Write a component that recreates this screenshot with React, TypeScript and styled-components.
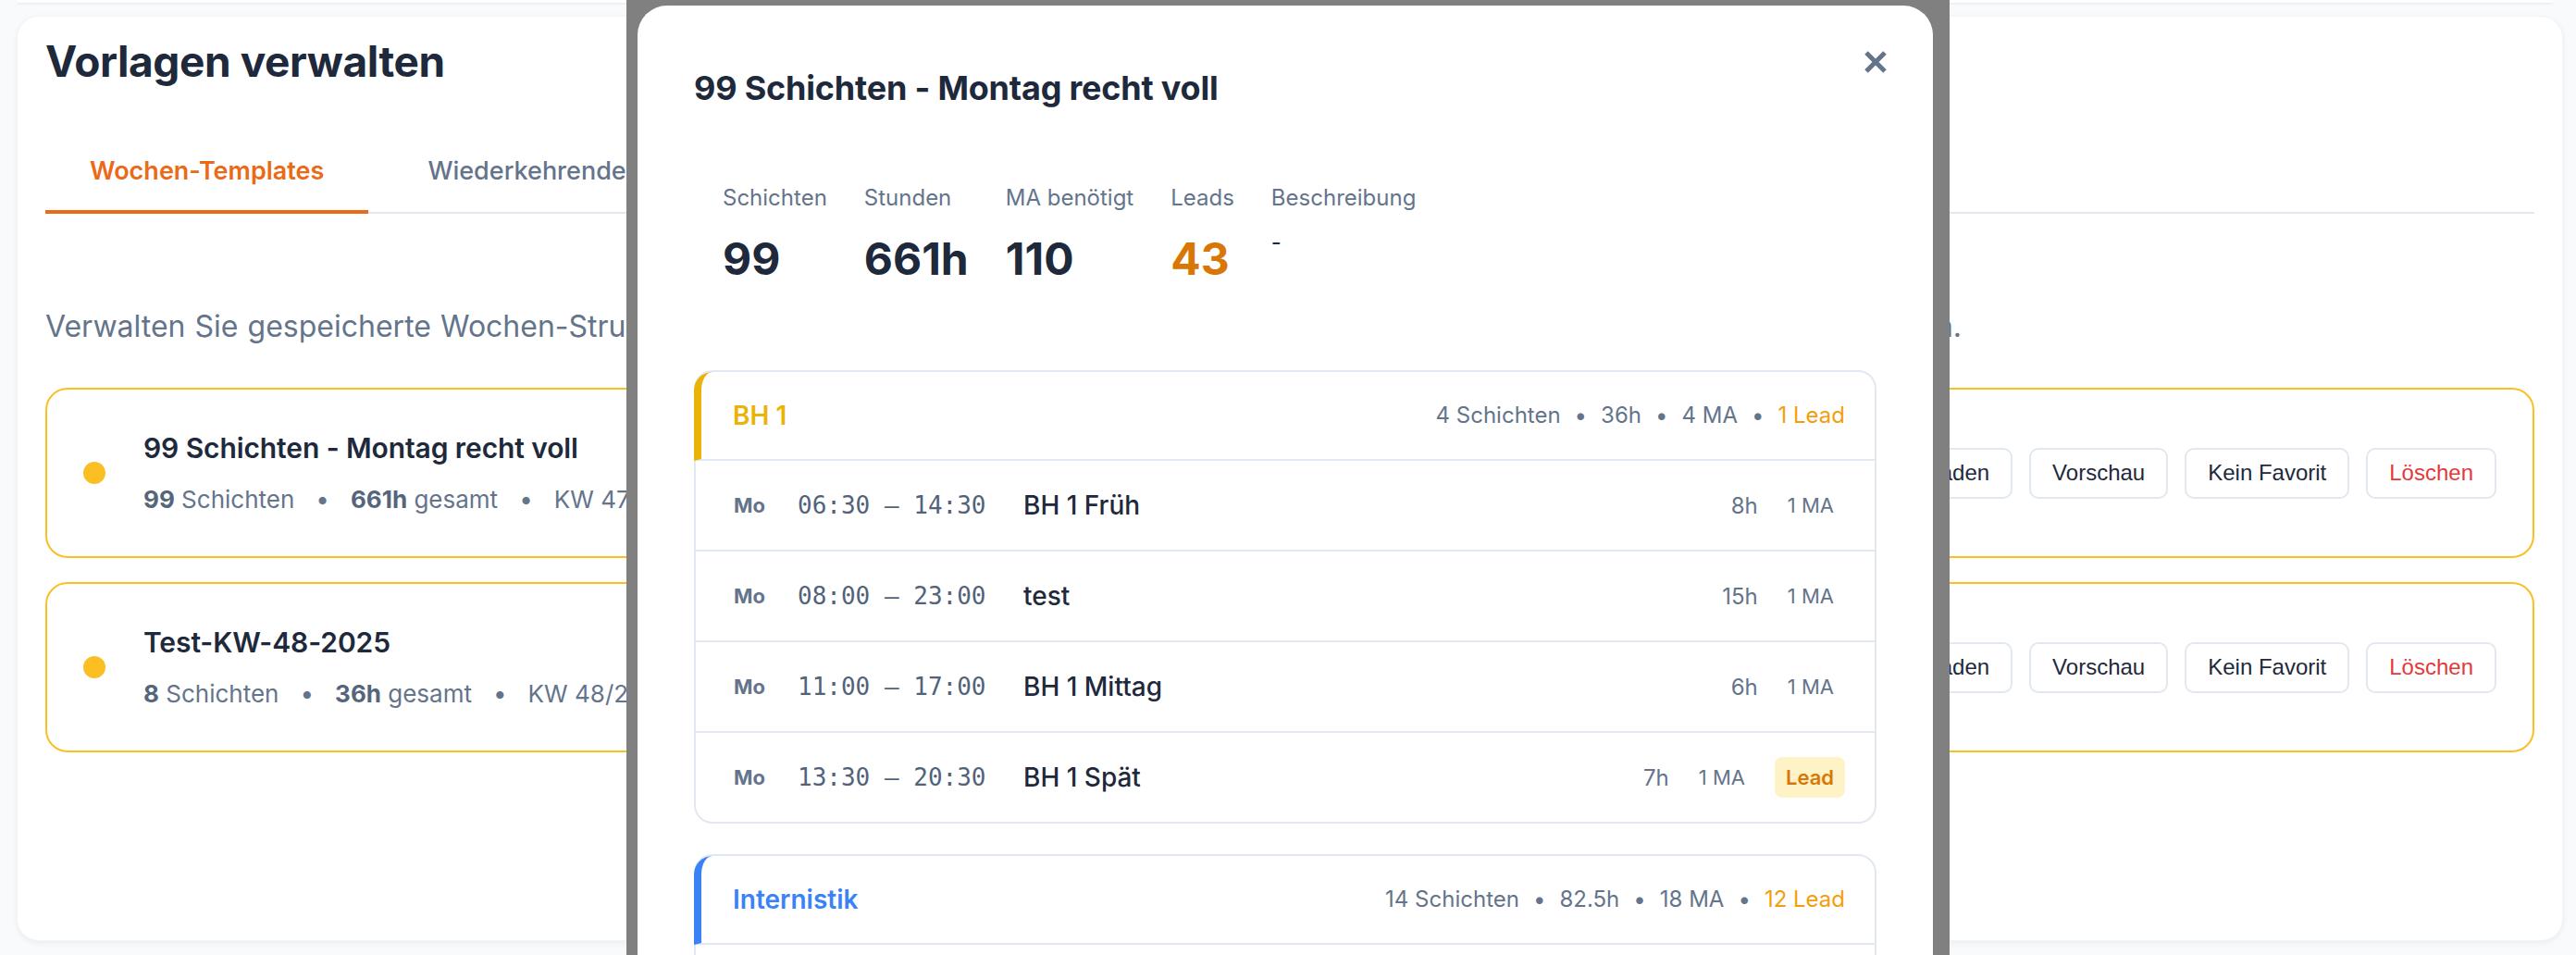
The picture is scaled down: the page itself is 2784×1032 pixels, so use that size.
import React from "react";
import styled, { createGlobalStyle } from "styled-components";

const GlobalStyle = createGlobalStyle`
  html, body {
    margin: 0;
    padding: 0;
    height: 1032px;
    overflow: hidden;
    background: #f8fafc;
  }
  body {
    font-family: Inter, "Noto Sans", sans-serif;
    color: #1e293b;
  }
  * {
    box-sizing: border-box;
  }
`;

const Page = styled.div`
  position: relative;
  height: 1032px;
  padding: 0 14px 0 18px;
`;

const TopStub = styled.div`
  height: 3px;
  width: 2742px;
  background: #fff;
  border-radius: 0 0 24px 24px;
  box-shadow: 0 1px 3px rgba(15, 23, 42, 0.08);
`;

const Card = styled.section`
  margin-top: 14px;
  width: 2752px;
  height: 1000px;
  background: #fff;
  border: 1px solid #f1f5f9;
  border-radius: 24px;
  box-shadow: 0 2px 6px rgba(15, 23, 42, 0.06);
  padding: 19px 30px 0;
`;

const PageTitle = styled.h1`
  margin: 0;
  font-size: 46px;
  line-height: 58px;
  font-weight: 700;
  letter-spacing: -0.4px;
  color: #1e293b;
`;

const TabList = styled.div`
  display: flex;
  gap: 16px;
  margin-top: 50px;
  border-bottom: 2px solid #e2e8f0;
`;

const Tab = styled.button<{ $active?: boolean }>`
  font-family: Inter, sans-serif;
  font-size: 27px;
  line-height: 40px;
  font-weight: ${(p) => (p.$active ? 600 : 500)};
  color: ${(p) => (p.$active ? "#ea6a17" : "#64748b")};
  background: none;
  border: none;
  padding: 20px 48px 22px;
  margin-bottom: -2px;
  border-bottom: 4px solid ${(p) => (p.$active ? "#ea6a17" : "transparent")};
  white-space: nowrap;
`;

const Intro = styled.p`
  margin: 98px 0 0;
  width: 2071px;
  font-size: 32px;
  line-height: 48px;
  color: #64748b;
  text-align-last: justify;
`;

const TemplateList = styled.div`
  display: flex;
  flex-direction: column;
  gap: 26px;
  margin-top: 42px;
`;

const TemplateCard = styled.div`
  display: flex;
  align-items: center;
  gap: 41px;
  height: 184px;
  padding: 0 39px;
  border: 2px solid #fbbf24;
  border-radius: 24px;
`;

const Dot = styled.span`
  flex-shrink: 0;
  width: 24px;
  height: 24px;
  border-radius: 50%;
  background: #fbbf24;
`;

const TemplateInfo = styled.div`
  flex: 1;
  min-width: 0;
`;

const TemplateName = styled.div`
  font-size: 30px;
  line-height: 40px;
  font-weight: 600;
  letter-spacing: -0.1px;
  color: #1e293b;
`;

const TemplateMeta = styled.div`
  margin-top: 18px;
  font-size: 26px;
  line-height: 36px;
  color: #64748b;
  white-space: nowrap;

  b {
    font-weight: 700;
    color: #55657c;
  }
`;

const Sep = styled.span<{ $space?: number }>`
  margin: 0 ${(p) => p.$space ?? 23}px;
`;

const Actions = styled.div`
  display: flex;
  gap: 18px;
`;

const ActionButton = styled.button<{ $danger?: boolean }>`
  height: 55px;
  padding: 0 23px;
  background: #fff;
  border: 2px solid #e2e8f0;
  border-radius: 10px;
  font-family: "Liberation Sans", Arial, sans-serif;
  font-size: 24px;
  color: ${(p) => (p.$danger ? "#e5383b" : "#1e293b")};
  white-space: nowrap;
`;

/* modal */

const Overlay = styled.div`
  position: absolute;
  top: 0;
  left: 677px;
  width: 1430px;
  height: 1032px;
  background: #808080;
  overflow: hidden;
`;

const Modal = styled.div`
  margin: 6px 0 0 12px;
  width: 1400px;
  height: 1100px;
  background: #fff;
  border-radius: 32px 32px 0 0;
`;

const ModalHeader = styled.div`
  display: flex;
  justify-content: space-between;
  align-items: flex-start;
  padding: 49px 49px 0 61px;
`;

const ModalTitle = styled.h2`
  margin: 16px 0 0;
  font-size: 36px;
  line-height: 48px;
  font-weight: 700;
  letter-spacing: -0.2px;
  color: #1e293b;
`;

const CloseButton = styled.button`
  display: flex;
  padding: 0;
  border: none;
  background: none;
`;

const Stats = styled.div`
  display: flex;
  gap: 40px;
  margin-top: 79px;
  padding-left: 92px;
`;

const Stat = styled.div`
  display: flex;
  flex-direction: column;
`;

const StatLabel = styled.div`
  font-size: 24px;
  line-height: 32px;
  color: #64748b;
  white-space: nowrap;
`;

const StatValue = styled.div<{ $accent?: boolean }>`
  margin-top: 22px;
  font-size: 48px;
  line-height: 56px;
  font-weight: 700;
  color: ${(p) => (p.$accent ? "#d97706" : "#1e293b")};
`;

const StatText = styled.div`
  margin-top: 16px;
  font-size: 24px;
  line-height: 32px;
  color: #1e293b;
`;

const Groups = styled.div`
  display: flex;
  flex-direction: column;
  gap: 33px;
  margin-top: 92px;
  padding: 0 61px;
`;

const GroupBox = styled.div<{ $open?: boolean }>`
  min-height: ${(p) => (p.$open ? "200px" : "0")};
  border: 2px solid #e2e8f0;
  border-radius: 20px;
`;

const GroupHeader = styled.div<{ $color: string }>`
  display: flex;
  align-items: center;
  justify-content: space-between;
  height: 96px;
  margin-left: -2px;
  padding: 0 32px 0 34px;
  border-left: 8px solid ${(p) => p.$color};
  border-bottom: 2px solid #e2e8f0;
  border-top-left-radius: 20px;
`;

const GroupName = styled.div<{ $color: string }>`
  font-size: 28px;
  line-height: 40px;
  font-weight: 600;
  color: ${(p) => p.$color};
`;

const GroupStats = styled.div`
  font-size: 24px;
  line-height: 32px;
  color: #64748b;
  white-space: nowrap;
`;

const LeadText = styled.span`
  color: #f59e0b;
`;

const ShiftRow = styled.div`
  display: flex;
  align-items: center;
  height: 98px;
  padding: 0 32px 0 41px;
  border-bottom: 2px solid #e2e8f0;

  &:last-child {
    height: 96px;
    border-bottom: none;
  }
`;

const Day = styled.span`
  width: 69px;
  font-size: 22px;
  font-weight: 700;
  color: #64748b;
`;

const Time = styled.span`
  width: 244px;
  font-family: "DejaVu Sans Mono", "Liberation Mono", monospace;
  font-size: 26px;
  color: #52627a;
  white-space: nowrap;
`;

const ShiftName = styled.span`
  flex: 1;
  font-size: 28px;
  font-weight: 500;
  color: #1e293b;
`;

const ShiftSide = styled.div<{ $lead?: boolean }>`
  display: flex;
  align-items: center;
  gap: 32px;
  padding-right: ${(p) => (p.$lead ? 0 : 12)}px;
`;

const Hours = styled.span`
  font-size: 24px;
  color: #64748b;
`;

const Staff = styled.span`
  font-size: 22px;
  color: #64748b;
`;

const LeadBadge = styled.span`
  display: flex;
  align-items: center;
  height: 44px;
  padding: 0 12px;
  border-radius: 8px;
  background: #fef3c7;
  color: #d97706;
  font-size: 22px;
  font-weight: 600;
`;

interface Shift {
  day: string;
  time: string;
  name: string;
  hours: string;
  lead?: boolean;
}

interface Group {
  name: string;
  color: string;
  stats: string[];
  leads: string;
  shifts: Shift[];
}

const groups: Group[] = [
  {
    name: "BH 1",
    color: "#eab308",
    stats: ["4 Schichten", "36h", "4 MA"],
    leads: "1 Lead",
    shifts: [
      { day: "Mo", time: "06:30 – 14:30", name: "BH 1 Früh", hours: "8h" },
      { day: "Mo", time: "08:00 – 23:00", name: "test", hours: "15h" },
      { day: "Mo", time: "11:00 – 17:00", name: "BH 1 Mittag", hours: "6h" },
      { day: "Mo", time: "13:30 – 20:30", name: "BH 1 Spät", hours: "7h", lead: true },
    ],
  },
  {
    // rows of this group lie below the visible area
    name: "Internistik",
    color: "#3b82f6",
    stats: ["14 Schichten", "82.5h", "18 MA"],
    leads: "12 Lead",
    shifts: [],
  },
];

const templates = [
  { name: "99 Schichten - Montag recht voll", count: "99", hours: "661h", week: "KW 47/2025" },
  { name: "Test-KW-48-2025", count: "8", hours: "36h", week: "KW 48/2025" },
];

const CloseIcon = () => (
  <svg width="26" height="24" viewBox="0 0 26 24">
    <path d="M3 2 L23 22 M23 2 L3 22" stroke="#64748b" strokeWidth="5" fill="none" />
  </svg>
);

const App: React.FC = () => {
  return (
    <Page>
      <GlobalStyle />
      <TopStub />
      <Card>
        <PageTitle>Vorlagen verwalten</PageTitle>
        <TabList>
          <Tab $active>Wochen-Templates</Tab>
          <Tab>Wiederkehrende Schichten</Tab>
        </TabList>
        <Intro>
          Verwalten Sie gespeicherte Wochen-Strukturen. Laden Sie eine Vorlage, um alle Schichten direkt in
          die aktuelle Woche zu übernehmen.
        </Intro>
        <TemplateList>
          {templates.map((t) => (
            <TemplateCard key={t.name}>
              <Dot />
              <TemplateInfo>
                <TemplateName>{t.name}</TemplateName>
                <TemplateMeta>
                  <b>{t.count}</b> Schichten<Sep>•</Sep>
                  <b>{t.hours}</b> gesamt<Sep>•</Sep>
                  {t.week}
                </TemplateMeta>
              </TemplateInfo>
              <Actions>
                <ActionButton>Laden</ActionButton>
                <ActionButton>Vorschau</ActionButton>
                <ActionButton>Kein Favorit</ActionButton>
                <ActionButton $danger>Löschen</ActionButton>
              </Actions>
            </TemplateCard>
          ))}
        </TemplateList>
      </Card>

      <Overlay>
        <Modal>
          <ModalHeader>
            <ModalTitle>99 Schichten - Montag recht voll</ModalTitle>
            <CloseButton aria-label="Schließen">
              <CloseIcon />
            </CloseButton>
          </ModalHeader>
          <Stats>
            <Stat>
              <StatLabel>Schichten</StatLabel>
              <StatValue>99</StatValue>
            </Stat>
            <Stat>
              <StatLabel>Stunden</StatLabel>
              <StatValue>661h</StatValue>
            </Stat>
            <Stat>
              <StatLabel>MA benötigt</StatLabel>
              <StatValue>110</StatValue>
            </Stat>
            <Stat>
              <StatLabel>Leads</StatLabel>
              <StatValue $accent>43</StatValue>
            </Stat>
            <Stat>
              <StatLabel>Beschreibung</StatLabel>
              <StatText>-</StatText>
            </Stat>
          </Stats>
          <Groups>
            {groups.map((g) => (
              <GroupBox key={g.name} $open={g.shifts.length === 0}>
                <GroupHeader $color={g.color}>
                  <GroupName $color={g.color}>{g.name}</GroupName>
                  <GroupStats>
                    {g.stats.map((part) => (
                      <React.Fragment key={part}>
                        {part}
                        <Sep $space={15}>•</Sep>
                      </React.Fragment>
                    ))}
                    <LeadText>{g.leads}</LeadText>
                  </GroupStats>
                </GroupHeader>
                {g.shifts.map((s) => (
                  <ShiftRow key={s.name + s.time}>
                    <Day>{s.day}</Day>
                    <Time>{s.time}</Time>
                    <ShiftName>{s.name}</ShiftName>
                    <ShiftSide $lead={s.lead}>
                      <Hours>{s.hours}</Hours>
                      <Staff>1 MA</Staff>
                      {s.lead && <LeadBadge>Lead</LeadBadge>}
                    </ShiftSide>
                  </ShiftRow>
                ))}
              </GroupBox>
            ))}
          </Groups>
        </Modal>
      </Overlay>
    </Page>
  );
};

export default App;
